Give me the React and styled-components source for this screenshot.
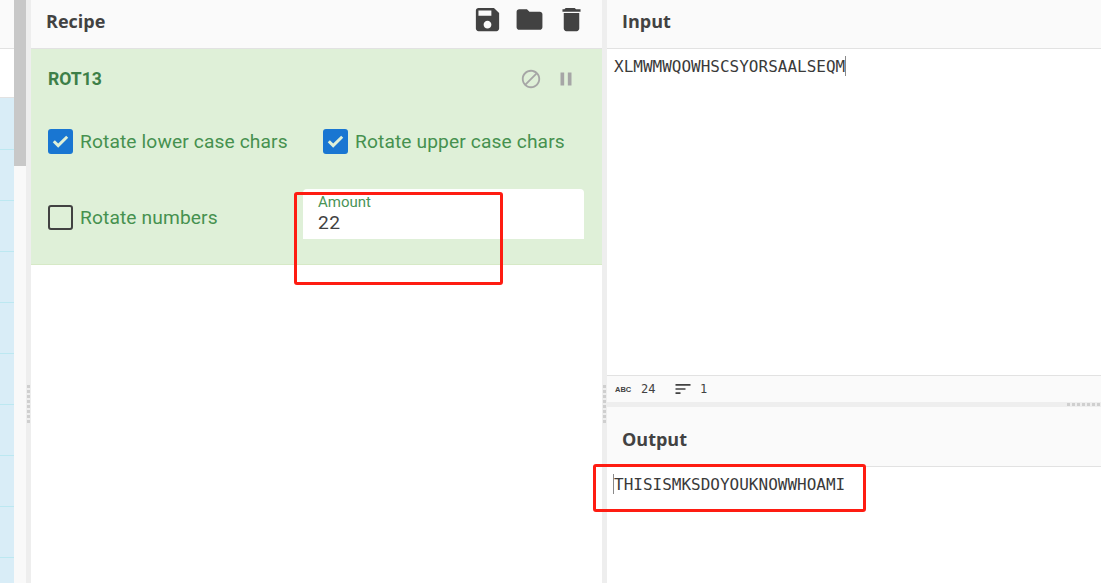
import React from "react";
import styled, { createGlobalStyle } from "styled-components";

const GlobalStyle = createGlobalStyle`
  html, body {
    margin: 0;
    padding: 0;
    background: #fff;
    font-family: Roboto, "Liberation Sans", sans-serif;
  }
  * { box-sizing: border-box; }
`;

const Page = styled.div`
  position: relative;
  display: flex;
  width: 1101px;
  height: 583px;
  overflow: hidden;
`;

const Catalogue = styled.div`
  width: 14px;
  flex: none;
  display: flex;
  flex-direction: column;
`;

const CatalogueHead = styled.div`
  height: 49px;
  flex: none;
  background: #fafafa;
  border-bottom: 1px solid #e2e2e2;
`;

const CatalogueSearch = styled.div`
  height: 49px;
  flex: none;
  background: #fff;
  border-bottom: 1px solid #e2e2e2;
`;

const CatalogueItem = styled.div`
  height: ${(p) => (p.$first ? 52 : 51)}px;
  flex: none;
  background: #d9edf7;
  border-bottom: 1px solid #bce8f1;
`;

const Scrollbar = styled.div`
  width: 12px;
  flex: none;
  background: #f9f9f9;
`;

const ScrollThumb = styled.div`
  height: 166px;
  background: #c8c8c8;
`;

const Gutter = styled.div`
  width: 5px;
  flex: none;
  background: #eeeeee;
  display: flex;
  flex-direction: column;
  align-items: center;
  gap: 2px;
  padding-top: 385px;
`;

const GripDot = styled.span`
  width: 3px;
  height: 3px;
  flex: none;
  background: #cfcfcf;
`;

const RecipePane = styled.section`
  width: 571px;
  flex: none;
  display: flex;
  flex-direction: column;
`;

const PaneHead = styled.header`
  height: ${(p) => p.$height || 49}px;
  flex: none;
  display: flex;
  align-items: center;
  justify-content: space-between;
  padding: ${(p) => p.$pad || "0 15px 7px"};
  background: #fafafa;
  border-bottom: 1px solid #e2e2e2;
`;

const PaneTitle = styled.h2`
  margin: 0;
  font-family: "Open Sans", Roboto, sans-serif;
  font-size: 18px;
  font-weight: 700;
  color: #424242;
`;

const HeadIcons = styled.div`
  display: flex;
  gap: 11px;
  margin-top: -3px;
  color: #424242;
`;

const Operation = styled.div`
  height: 216px;
  flex: none;
  background: #dff0d8;
  border-bottom: 1px solid #d6e9c6;
  padding: 0 18px 0 17px;
`;

const OpHead = styled.div`
  height: 60px;
  display: flex;
  align-items: center;
  justify-content: space-between;
`;

const OpTitle = styled.div`
  font-size: 17.6px;
  font-weight: 700;
  color: #3d7f48;
`;

const OpIcons = styled.div`
  display: flex;
  align-items: center;
  gap: 13px;
  padding-right: 7px;
  color: #a6a6a6;
`;

const Options = styled.div`
  display: grid;
  grid-template-columns: 275px 1fr;
  grid-template-rows: 64px 77px;
`;

const CheckRow = styled.label`
  display: flex;
  align-items: center;
  gap: 7px;
  font-size: 19.2px;
  letter-spacing: 0.12px;
  color: #46914f;
  padding-top: ${(p) => p.$top || 0}px;
`;

const Box = styled.span`
  width: 25px;
  height: 25px;
  flex: none;
  border-radius: 3px;
  display: flex;
  align-items: center;
  justify-content: center;
  background: ${(p) => (p.$on ? "#1976d2" : "transparent")};
  border: ${(p) => (p.$on ? "none" : "2px solid #424242")};
`;

const AmountField = styled.div`
  height: 50px;
  width: 281px;
  margin: 16px 0 0 -20px;
  background: #fff;
  border-radius: 4px 4px 0 0;
  padding: 4px 15px 0;
`;

const AmountLabel = styled.div`
  font-size: 15px;
  line-height: 18px;
  color: #4a9457;
`;

const AmountValue = styled.div`
  font-size: 19.2px;
  line-height: 23px;
  letter-spacing: 0.4px;
  color: #424242;
`;

const RightPane = styled.section`
  flex: 1;
  min-width: 0;
  display: flex;
  flex-direction: column;
`;

const InputBody = styled.div`
  height: 326px;
  flex: none;
  background: #fff;
  padding: 7px 7px 0;
`;

const OutputBody = styled.div`
  flex: 1;
  background: #fff;
  padding: 7px 6px 0;
`;

const MonoLine = styled.div`
  display: flex;
  align-items: center;
  height: 20px;
  font-family: "DejaVu Sans Mono", "Liberation Mono", monospace;
  font-size: 16px;
  color: #3a3a3a;
  white-space: nowrap;
`;

const Caret = styled.span`
  width: 1px;
  height: 20px;
  flex: none;
  background: #8a8a8a;
`;

const StatusBar = styled.div`
  height: 27px;
  flex: none;
  background: #fafafa;
  border-top: 1px solid #e2e2e2;
  display: flex;
  align-items: center;
  padding-left: 8px;
  font-family: "DejaVu Sans Mono", "Liberation Mono", monospace;
  font-size: 12px;
  color: #424242;
`;

const StatGroup = styled.span`
  display: flex;
  align-items: center;
  gap: ${(p) => p.$gap}px;
  width: ${(p) => p.$width}px;
`;

const AbcTag = styled.span`
  width: 16px;
  font-family: "Liberation Sans", sans-serif;
  font-size: 7.5px;
  font-weight: 700;
`;

const HSplit = styled.div`
  height: 5px;
  flex: none;
  background: #eeeeee;
  display: flex;
  justify-content: flex-end;
  align-items: center;
  gap: 2px;
  padding-right: 1px;
`;

const Highlight = styled.div`
  position: absolute;
  left: ${(p) => p.$x}px;
  top: ${(p) => p.$y}px;
  width: ${(p) => p.$w}px;
  height: ${(p) => p.$h}px;
  border: 3px solid #fe1c12;
  border-radius: 3px;
`;

const Icon = ({ d, size }) => (
  <svg width={size} height={size} viewBox="0 0 24 24" fill="currentColor">
    <path d={d} />
  </svg>
);

const paths = {
  save: "M17 3H5c-1.11 0-2 .9-2 2v14c0 1.1.89 2 2 2h14c1.1 0 2-.9 2-2V7l-4-4zm-5 16c-1.66 0-3-1.34-3-3s1.34-3 3-3 3 1.34 3 3-1.34 3-3 3zm3-10H5V5h10v4z",
  folder: "M10 4H4c-1.1 0-1.99.9-1.99 2L2 18c0 1.1.9 2 2 2h16c1.1 0 2-.9 2-2V8c0-1.1-.9-2-2-2h-8l-2-2z",
  trash: "M6 19c0 1.1.9 2 2 2h8c1.1 0 2-.9 2-2V7H6v12zM19 4h-3.5l-1-1h-7l-1 1H5v2h14V4z",
  block: "M12 2C6.48 2 2 6.48 2 12s4.48 10 10 10 10-4.48 10-10S17.52 2 12 2zM4 12c0-4.42 3.58-8 8-8 1.85 0 3.55.63 4.9 1.69L5.69 16.9C4.63 15.55 4 13.85 4 12zm8 8c-1.85 0-3.55-.63-4.9-1.69L18.31 7.1C19.37 8.45 20 10.15 20 12c0 4.42-3.58 8-8 8z",
  pause: "M6 19h4V5H6v14zm8-14v14h4V5h-4z",
  lines: "M3 18h6v-2H3v2zM3 6v2h18V6H3zm0 7h12v-2H3v2z",
};

const Check = ({ on }) => (
  <Box $on={on}>
    {on && (
      <svg width="25" height="25" viewBox="0 0 25 25" fill="none">
        <path d="M5.8 12.2l4.4 4.4 9-8.8" stroke="#dff0d8" strokeWidth="3" />
      </svg>
    )}
  </Box>
);

const range = (n) => Array.from({ length: n });

export default function App() {
  return (
    <Page>
      <GlobalStyle />
      <Catalogue>
        <CatalogueHead />
        <CatalogueSearch />
        {range(10).map((_, i) => (
          <CatalogueItem key={i} $first={i === 0} />
        ))}
      </Catalogue>
      <Scrollbar>
        <ScrollThumb />
      </Scrollbar>
      <Gutter>
        {range(8).map((_, i) => (
          <GripDot key={i} />
        ))}
      </Gutter>

      <RecipePane>
        <PaneHead>
          <PaneTitle>Recipe</PaneTitle>
          <HeadIcons>
            <Icon d={paths.save} size={31} />
            <Icon d={paths.folder} size={31} />
            <Icon d={paths.trash} size={31} />
          </HeadIcons>
        </PaneHead>
        <Operation>
          <OpHead>
            <OpTitle>ROT13</OpTitle>
            <OpIcons>
              <Icon d={paths.block} size={22} />
              <Icon d={paths.pause} size={22} />
            </OpIcons>
          </OpHead>
          <Options>
            <CheckRow>
              <Check on />
              Rotate lower case chars
            </CheckRow>
            <CheckRow>
              <Check on />
              Rotate upper case chars
            </CheckRow>
            <CheckRow $top={12}>
              <Check />
              Rotate numbers
            </CheckRow>
            <AmountField>
              <AmountLabel>Amount</AmountLabel>
              <AmountValue>22</AmountValue>
            </AmountField>
          </Options>
        </Operation>
      </RecipePane>

      <Gutter>
        {range(8).map((_, i) => (
          <GripDot key={i} />
        ))}
      </Gutter>

      <RightPane>
        <PaneHead>
          <PaneTitle>Input</PaneTitle>
        </PaneHead>
        <InputBody>
          <MonoLine>
            XLMWMWQOWHSCSYORSAALSEQM
            <Caret />
          </MonoLine>
        </InputBody>
        <StatusBar>
          <StatGroup $gap={10} $width={58}>
            <AbcTag>ABC</AbcTag>
            24
          </StatGroup>
          <StatGroup $gap={7} $width={40}>
            <Icon d={paths.lines} size={20} />1
          </StatGroup>
        </StatusBar>
        <HSplit>
          {range(7).map((_, i) => (
            <GripDot key={i} />
          ))}
        </HSplit>
        <PaneHead $height={60} $pad="4px 15px 0">
          <PaneTitle>Output</PaneTitle>
        </PaneHead>
        <OutputBody>
          <MonoLine>
            <Caret />
            THISISMKSDOYOUKNOWWHOAMI
          </MonoLine>
        </OutputBody>
      </RightPane>

      <Highlight $x={294} $y={192} $w={209} $h={93} />
      <Highlight $x={593} $y={464} $w={273} $h={48} />
    </Page>
  );
}
